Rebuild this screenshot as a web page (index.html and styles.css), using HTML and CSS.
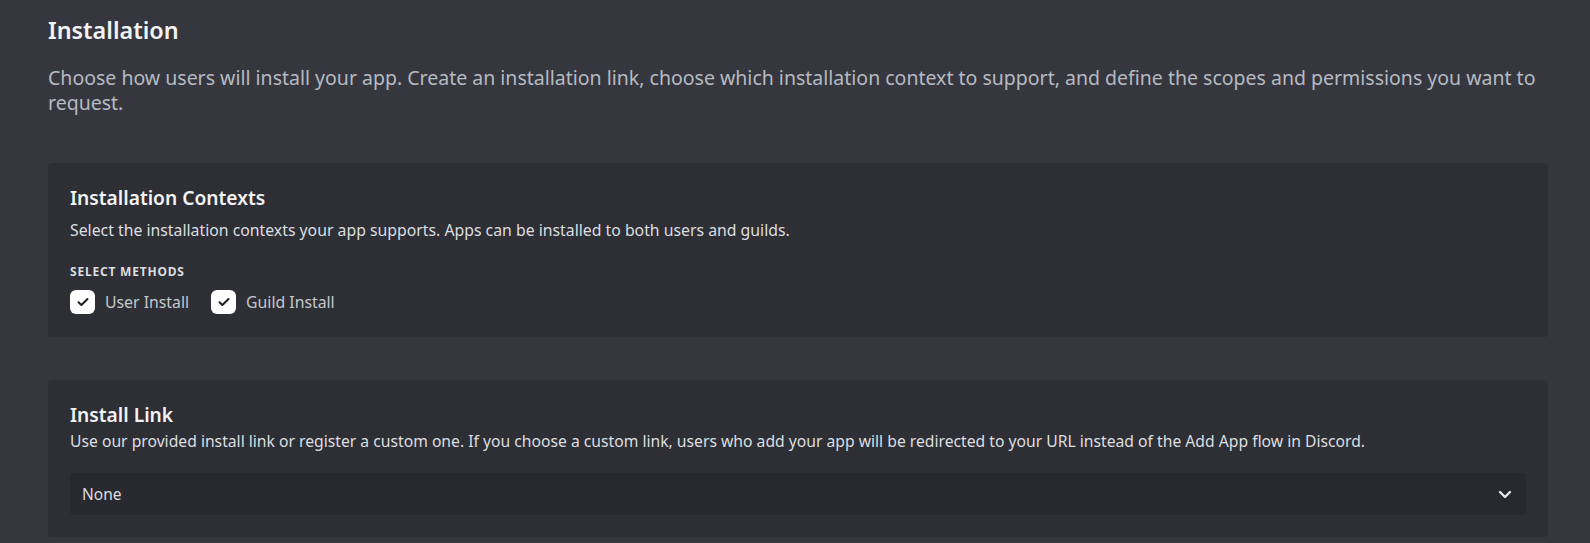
FILE: index.html
```html
<!DOCTYPE html>
<html lang="en">
<head>
<meta charset="utf-8">
<title>Installation</title>
<link rel="stylesheet" href="styles.css">
</head>
<body>
<main class="page">
  <h1 class="page-title">Installation</h1>
  <p class="page-desc">Choose how users will install your app. Create an installation link, choose which installation context to support, and define the scopes and permissions you want to request.</p>

  <section class="card card-contexts">
    <h2 class="card-title">Installation Contexts</h2>
    <p class="card-desc">Select the installation contexts your app supports. Apps can be installed to both users and guilds.</p>
    <div class="field-label">Select Methods</div>
    <div class="checks">
      <label class="check">
        <span class="box"><svg width="12" height="10" viewBox="0 0 12 10"><path d="M1.5 5.2 L4.4 8 L10.5 2" fill="none" stroke="#202125" stroke-width="2" stroke-linecap="round" stroke-linejoin="round"/></svg></span>
        <span class="check-text">User Install</span>
      </label>
      <label class="check">
        <span class="box"><svg width="12" height="10" viewBox="0 0 12 10"><path d="M1.5 5.2 L4.4 8 L10.5 2" fill="none" stroke="#202125" stroke-width="2" stroke-linecap="round" stroke-linejoin="round"/></svg></span>
        <span class="check-text">Guild Install</span>
      </label>
    </div>
  </section>

  <section class="card card-link">
    <h2 class="card-title">Install Link</h2>
    <p class="card-desc tight">Use our provided install link or register a custom one. If you choose a custom link, users who add your app will be redirected to your URL instead of the Add App flow in Discord.</p>
    <div class="select">
      <span class="select-value">None</span>
      <svg class="chevron" width="14" height="9" viewBox="0 0 14 9"><path d="M2 2 L7 7 L12 2" fill="none" stroke="#e6e7ea" stroke-width="2.4" stroke-linecap="round" stroke-linejoin="round"/></svg>
    </div>
  </section>
</main>
</body>
</html>
```

FILE: styles.css
```css
* { box-sizing: border-box; }
html, body { margin: 0; padding: 0; }
body {
  background: #36373e;
  font-family: "Noto Sans", "Open Sans", sans-serif;
  color: #dbdee1;
  height: 543px;
  overflow: hidden;
}
.page {
  padding: 15px 42px 0 48px;
}
.page-title {
  margin: 0;
  font-size: 23.4px;
  line-height: 30px;
  font-weight: 600;
  color: #f2f3f5;
}
.page-desc {
  margin: 20px 0 0 0;
  font-size: 19.5px;
  line-height: 25px;
  color: #b5bac1;
}
.card {
  background: #2e2f34;
  border-radius: 4px;
  padding: 22px 22px 23px;
}
.card-contexts { margin-top: 48px; }
.card-link { margin-top: 43px; padding-bottom: 22px; }
.card-title {
  margin: 0;
  font-size: 19.2px;
  line-height: 26px;
  font-weight: 600;
  color: #f2f3f5;
}
.card-desc {
  margin: 9px 0 0 0;
  font-size: 15.8px;
  line-height: 20px;
  color: #dbdee1;
}
.card-desc.tight { margin-top: 3px; font-size: 15.7px; }
.field-label {
  margin-top: 24px;
  font-size: 12px;
  line-height: 16px;
  font-weight: 700;
  text-transform: uppercase;
  color: #dbdee1;
  letter-spacing: 0.8px;
}
.checks {
  margin-top: 10px;
  display: flex;
  gap: 22px;
}
.check {
  display: flex;
  align-items: center;
  gap: 10px;
  height: 24px;
}
.box {
  width: 25px;
  height: 24px;
  border-radius: 6px;
  background: #ffffff;
  display: flex;
  align-items: center;
  justify-content: center;
}
.check-text {
  font-size: 15.8px;
  line-height: 20px;
  color: #c4c8ce;
}
.select {
  margin-top: 22px;
  height: 42px;
  background: #28292e;
  border-radius: 4px;
  display: flex;
  align-items: center;
  justify-content: space-between;
  padding: 0 14px 0 12px;
}
.select-value {
  font-size: 15.5px;
  color: #dbdee1;
}
.chevron { display: block; }
```
